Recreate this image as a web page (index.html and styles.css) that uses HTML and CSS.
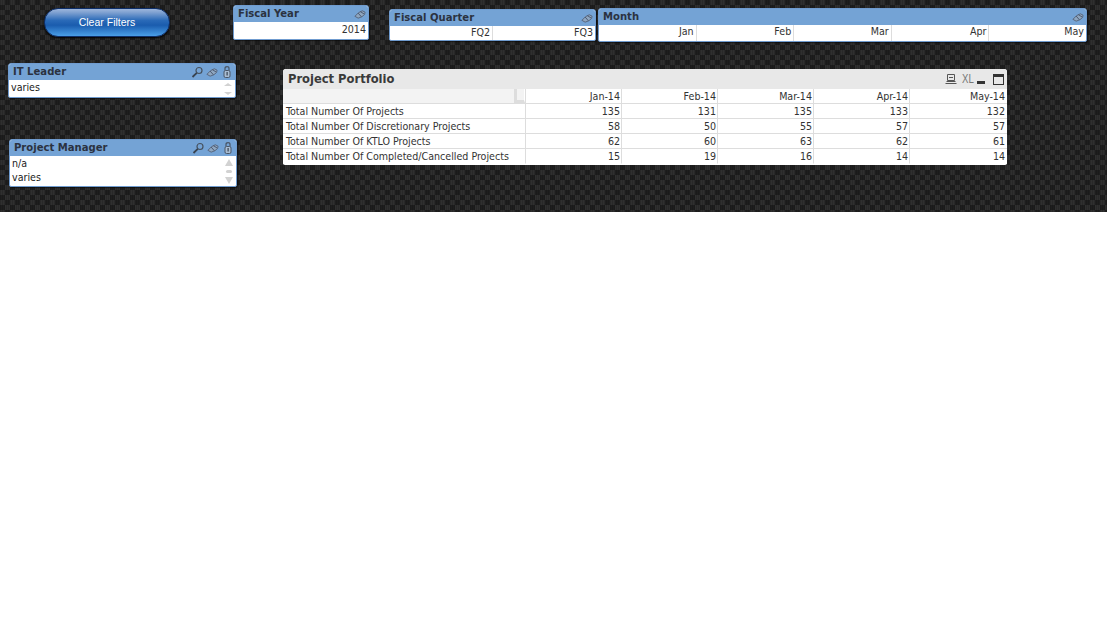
FILE: index.html
```html
<!DOCTYPE html>
<html lang="en">
<head>
<meta charset="utf-8">
<title>Project Portfolio</title>
<link rel="stylesheet" href="styles.css">
</head>
<body>
<svg width="0" height="0" class="defs">
  <defs>
    <g id="i-search"><circle cx="8" cy="4.500" r="3" fill="none" stroke="#46525f" stroke-width="1.200"/><path d="M5.800 6.800 1.500 11" stroke="#38424f" stroke-width="1.800"/></g>
    <g id="i-eraser"><path d="M1 8.500 5 4.500 9 2.500 12 4 11.500 6.500 8.500 9 4.500 10.500z" fill="#8ea6c0" stroke="#55637a"/><path d="M4.500 5 8 9M7 3.500l4 2.500" stroke="#46546a" fill="none"/></g>
    <g id="i-lock"><path d="M3.500 4.500V2.500a2 1.800 0 0 1 4 0v2" fill="none" stroke="#4a5666" stroke-width="1.200"/><rect x="2.500" y="4.500" width="6" height="7" rx="1.500" fill="#a8bcd2" stroke="#4a5666"/><rect x="5" y="6" width="1.200" height="3.500" fill="#38424f"/></g>
  </defs>
</svg>
<main class="sheet">
  <button class="clear-btn">Clear Filters</button>

  <section class="lb fiscal-year">
    <header class="cap"><h2>Fiscal Year</h2><span class="icons"><svg class="ic" viewBox="0 0 13 12"><use href="#i-eraser"/></svg></span></header>
    <div class="hcells tall"><span class="hc last">2014</span></div>
  </section>

  <section class="lb fiscal-quarter">
    <header class="cap"><h2>Fiscal Quarter</h2><span class="icons"><svg class="ic" viewBox="0 0 13 12"><use href="#i-eraser"/></svg></span></header>
    <div class="hcells"><span class="hc">FQ2</span><span class="hc last">FQ3</span></div>
  </section>

  <section class="lb month">
    <header class="cap"><h2>Month</h2><span class="icons"><svg class="ic" viewBox="0 0 13 12"><use href="#i-eraser"/></svg></span></header>
    <div class="hcells"><span class="hc">Jan</span><span class="hc">Feb</span><span class="hc">Mar</span><span class="hc">Apr</span><span class="hc last">May</span></div>
  </section>

  <section class="lb it-leader">
    <header class="cap"><h2>IT Leader</h2><span class="icons"><svg class="ic" viewBox="0 0 12 12"><use href="#i-search"/></svg><svg class="ic" viewBox="0 0 13 12"><use href="#i-eraser"/></svg><svg class="ic" viewBox="0 0 11 12"><use href="#i-lock"/></svg></span></header>
    <div class="vlist">
      <ul><li>varies</li></ul>
      <div class="sb small"><i class="up"></i><i class="down"></i></div>
    </div>
  </section>

  <section class="lb pm">
    <header class="cap"><h2>Project Manager</h2><span class="icons"><svg class="ic" viewBox="0 0 12 12"><use href="#i-search"/></svg><svg class="ic" viewBox="0 0 13 12"><use href="#i-eraser"/></svg><svg class="ic" viewBox="0 0 11 12"><use href="#i-lock"/></svg></span></header>
    <div class="vlist">
      <ul><li>n/a</li><li>varies</li></ul>
      <div class="sb"><i class="up"></i><b></b><i class="down"></i></div>
    </div>
  </section>

  <section class="portfolio">
    <header class="pcap">
      <h1>Project Portfolio</h1>
      <span class="picons">
        <svg class="pi" viewBox="0 0 12 12"><path d="M2.500 1.500h7v6h-7zM.5 10.500h11M1.500 8.500h9M4 4.500h4" fill="none" stroke="#555"/></svg>
        <span class="xl">XL</span>
        <span class="min"></span>
        <span class="max"></span>
      </span>
    </header>
    <table>
      <thead>
        <tr><th class="corner"><span class="grip"></span></th><th>Jan-14</th><th>Feb-14</th><th>Mar-14</th><th>Apr-14</th><th>May-14</th></tr>
      </thead>
      <tbody>
        <tr><td>Total Number Of Projects</td><td>135</td><td>131</td><td>135</td><td>133</td><td>132</td></tr>
        <tr><td>Total Number Of Discretionary Projects</td><td>58</td><td>50</td><td>55</td><td>57</td><td>57</td></tr>
        <tr><td>Total Number Of KTLO Projects</td><td>62</td><td>60</td><td>63</td><td>62</td><td>61</td></tr>
        <tr><td>Total Number Of Completed/Cancelled Projects</td><td>15</td><td>19</td><td>16</td><td>14</td><td>14</td></tr>
      </tbody>
    </table>
  </section>
</main>
</body>
</html>
```
FILE: styles.css
```css
* { box-sizing: border-box; }
html, body { margin: 0; padding: 0; background: #fff; }
body { font-family: "DejaVu Sans Condensed", "DejaVu Sans", sans-serif; font-stretch: condensed; font-size: 10.600px; color: #333; }
.defs { position: absolute; }

.sheet {
  position: relative;
  width: 1107px;
  height: 212px;
  background-color: #262626;
  background-image:
    repeating-linear-gradient(90deg, rgba(0,0,0,.15) 0 1px, transparent 1px 2px),
    conic-gradient(#1e1e1e 25%, #2f2f2f 0 50%, #1e1e1e 0 75%, #2f2f2f 0);
  background-size: auto, 10px 10px;
  overflow: hidden;
}

.clear-btn {
  position: absolute; left: 44px; top: 8px; width: 126px; height: 29px;
  border: 1px solid #0e2f6a; border-radius: 14px;
  background: linear-gradient(#9db6dc 0, #7c9fd0 14%, #2a6ab8 42%, #1a5cae 60%, #4a9fe8 100%);
  color: #fff; font: 10.500px "Liberation Sans", Arial, sans-serif; padding: 0 0 2px;
  box-shadow: 0 1px 2px #000;
}

.lb { position: absolute; background: #fff; border: 1px solid #6f9bcf; border-radius: 3px 3px 2px 2px; overflow: hidden; display: flex; flex-direction: column; box-shadow: 1px 1px 1px rgba(0,0,0,.5); }
.fiscal-year { left: 233px; top: 5px; width: 136px; height: 35px; }
.fiscal-quarter { left: 389px; top: 9px; width: 207px; height: 32px; }
.month { left: 598px; top: 8px; width: 489px; height: 34px; }
.it-leader { left: 8px; top: 63px; width: 228px; height: 35px; }
.pm { left: 9px; top: 139px; width: 228px; height: 48px; }

.cap { flex: none; height: 16px; background: #74a3d5; display: flex; align-items: center; justify-content: space-between; padding: 0 2px 1px 4px; }
.cap h2 { margin: 0; font: bold 11.200px "DejaVu Sans Condensed", "DejaVu Sans", sans-serif; font-stretch: condensed; color: #2b3240; white-space: nowrap; }
.icons { display: flex; align-items: center; gap: 3px; }
.ic { width: 12px; height: 12px; display: block; }

.hcells { flex: 1; display: flex; color: #333; }
.hc { flex: 1; text-align: right; padding: 0 2px 0 0; border-right: 1px solid #ddd; line-height: 12px; }
.hcells.tall .hc { padding-top: 1px; line-height: 13px; }
.hc.last { border-right: 0; }

.vlist { flex: 1; display: flex; justify-content: space-between; min-height: 0; }
.vlist ul { margin: 0; padding: 0; list-style: none; }
.vlist li { height: 14px; line-height: 14px; padding-left: 2px; color: #222; }
.sb { width: 10px; margin-right: 2px; display: flex; flex-direction: column; align-items: center; justify-content: space-between; padding: 3px 0 2px; }
.sb i { display: block; width: 0; height: 0; border-left: 4px solid transparent; border-right: 4px solid transparent; }
.sb i.up { border-bottom: 7px solid #d2d2d2; }
.sb i.down { border-top: 7px solid #d2d2d2; }
.sb b { display: block; width: 6px; height: 3px; background: #d2d2d2; border-radius: 2px; }
.sb.small i.up { border-bottom-width: 3px; }
.sb.small i.down { border-top-width: 3px; }

.portfolio { position: absolute; left: 283px; top: 69px; width: 724px; height: 96px; background: #fff; border-radius: 3px 3px 2px 2px; overflow: hidden; }
.pcap { height: 20px; background: #e8e8e8; display: flex; align-items: center; justify-content: space-between; padding: 0 3px 2px 5px; }
.pcap h1 { margin: 0; font: bold 12.800px "DejaVu Sans Condensed", "DejaVu Sans", sans-serif; font-stretch: condensed; color: #3a3a3a; }
.picons { display: flex; align-items: center; gap: 4px; padding-top: 2px; }
.pi { width: 12px; height: 12px; }
.xl { font: 12px "Liberation Sans", Arial, sans-serif; color: #777; transform: scaleX(.8); width: 11px; margin-right: 1px; }
.min { width: 8px; height: 3px; background: #333; margin-top: 7px; }
.max { width: 11px; height: 11px; border: 1px solid #333; border-top-width: 3px; margin-left: 4px; }

table { width: 724px; border-collapse: separate; border-spacing: 0; table-layout: fixed; color: #333; }
th, td { height: 15px; padding: 0 1px 0 0; text-align: right; font-weight: normal; border-right: 1px solid #ddd; border-bottom: 1px solid #ddd; line-height: 14px; white-space: nowrap; }
th:last-child, td:last-child { border-right: 0; padding-right: 2px; }
tbody tr:last-child td { border-bottom-color: #fff; }
th:first-child { width: 243px; text-align: left; padding-left: 3px; }
td:first-child { text-align: left; padding-left: 3px; }
th:nth-child(n+2) { width: 96px; }
th:last-child { width: 97px; }
.corner { background: #f3f3f3; position: relative; }
.grip { position: absolute; right: 0; top: 0; width: 11px; height: 14px; border-left: 3px solid #ddd; border-bottom: 3px solid #ddd; border-right: 1px solid #fff; }
```
